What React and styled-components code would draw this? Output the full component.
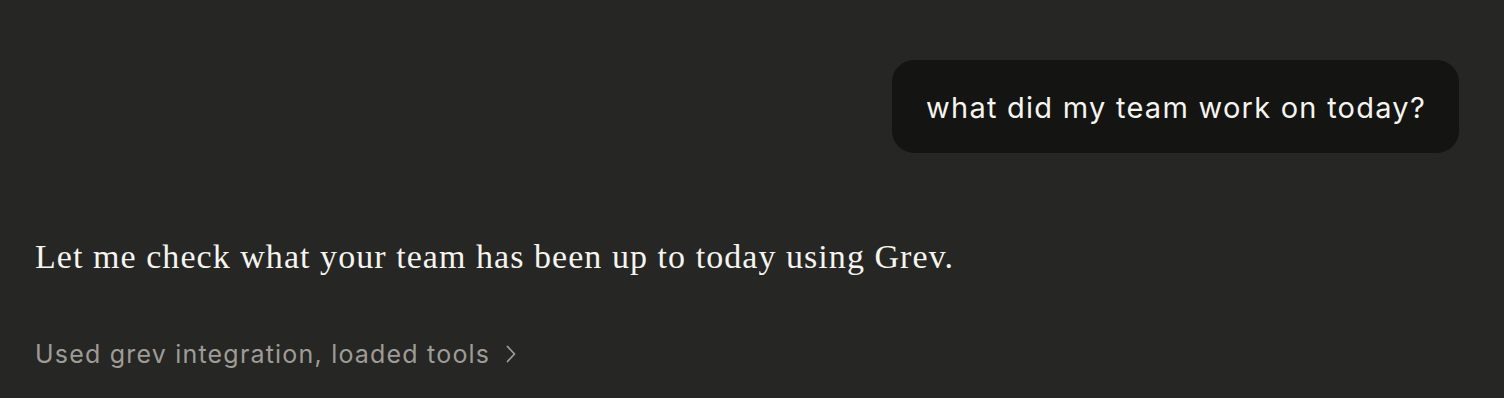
import React from "react";
import styled, { createGlobalStyle } from "styled-components";

const Global = createGlobalStyle`
  html, body { margin: 0; padding: 0; background: #262624; }
  body { width: 1504px; height: 398px; overflow: hidden; }
`;

const Page = styled.div`
  box-sizing: border-box;
  width: 1504px;
  height: 398px;
  padding: 60px 45px 0 35px;
  display: flex;
  flex-direction: column;
`;

const UserRow = styled.div`
  display: flex;
  justify-content: flex-end;
`;

const Bubble = styled.div`
  background: #141413;
  color: #f5f4ef;
  border-radius: 22px;
  padding: 1px 33px 0 34px;
  height: 93px;
  box-sizing: border-box;
  display: flex;
  align-items: center;
  font-family: "Inter", "Noto Sans", sans-serif;
  font-size: 29px;
  letter-spacing: 1.25px;
`;

const Reply = styled.p`
  margin: 80px 0 0;
  color: #f5f4ef;
  font-family: "Liberation Serif", serif;
  font-size: 34px;
  line-height: 48px;
  letter-spacing: 1.05px;
`;

const ToolLine = styled.button`
  margin-top: 55px;
  align-self: flex-start;
  background: none;
  border: none;
  padding: 0;
  display: flex;
  align-items: center;
  gap: 15px;
  color: #9e9c96;
  font-family: "Inter", "Noto Sans", sans-serif;
  font-size: 25px;
  line-height: 36px;
  letter-spacing: 1.2px;
  cursor: pointer;
`;

const Chevron = () => (
  <svg width="12" height="20" viewBox="0 0 12 20" fill="none">
    <path d="M2.5 2.5 L9.5 10 L2.5 17.5" stroke="#9e9c96" strokeWidth="1.8" strokeLinecap="round" strokeLinejoin="round" />
  </svg>
);

export default function App() {
  return (
    <>
      <Global />
      <Page>
        <UserRow>
          <Bubble>what did my team work on today?</Bubble>
        </UserRow>
        <Reply>Let me check what your team has been up to today using Grev.</Reply>
        <ToolLine>
          Used grev integration, loaded tools
          <Chevron />
        </ToolLine>
      </Page>
    </>
  );
}
